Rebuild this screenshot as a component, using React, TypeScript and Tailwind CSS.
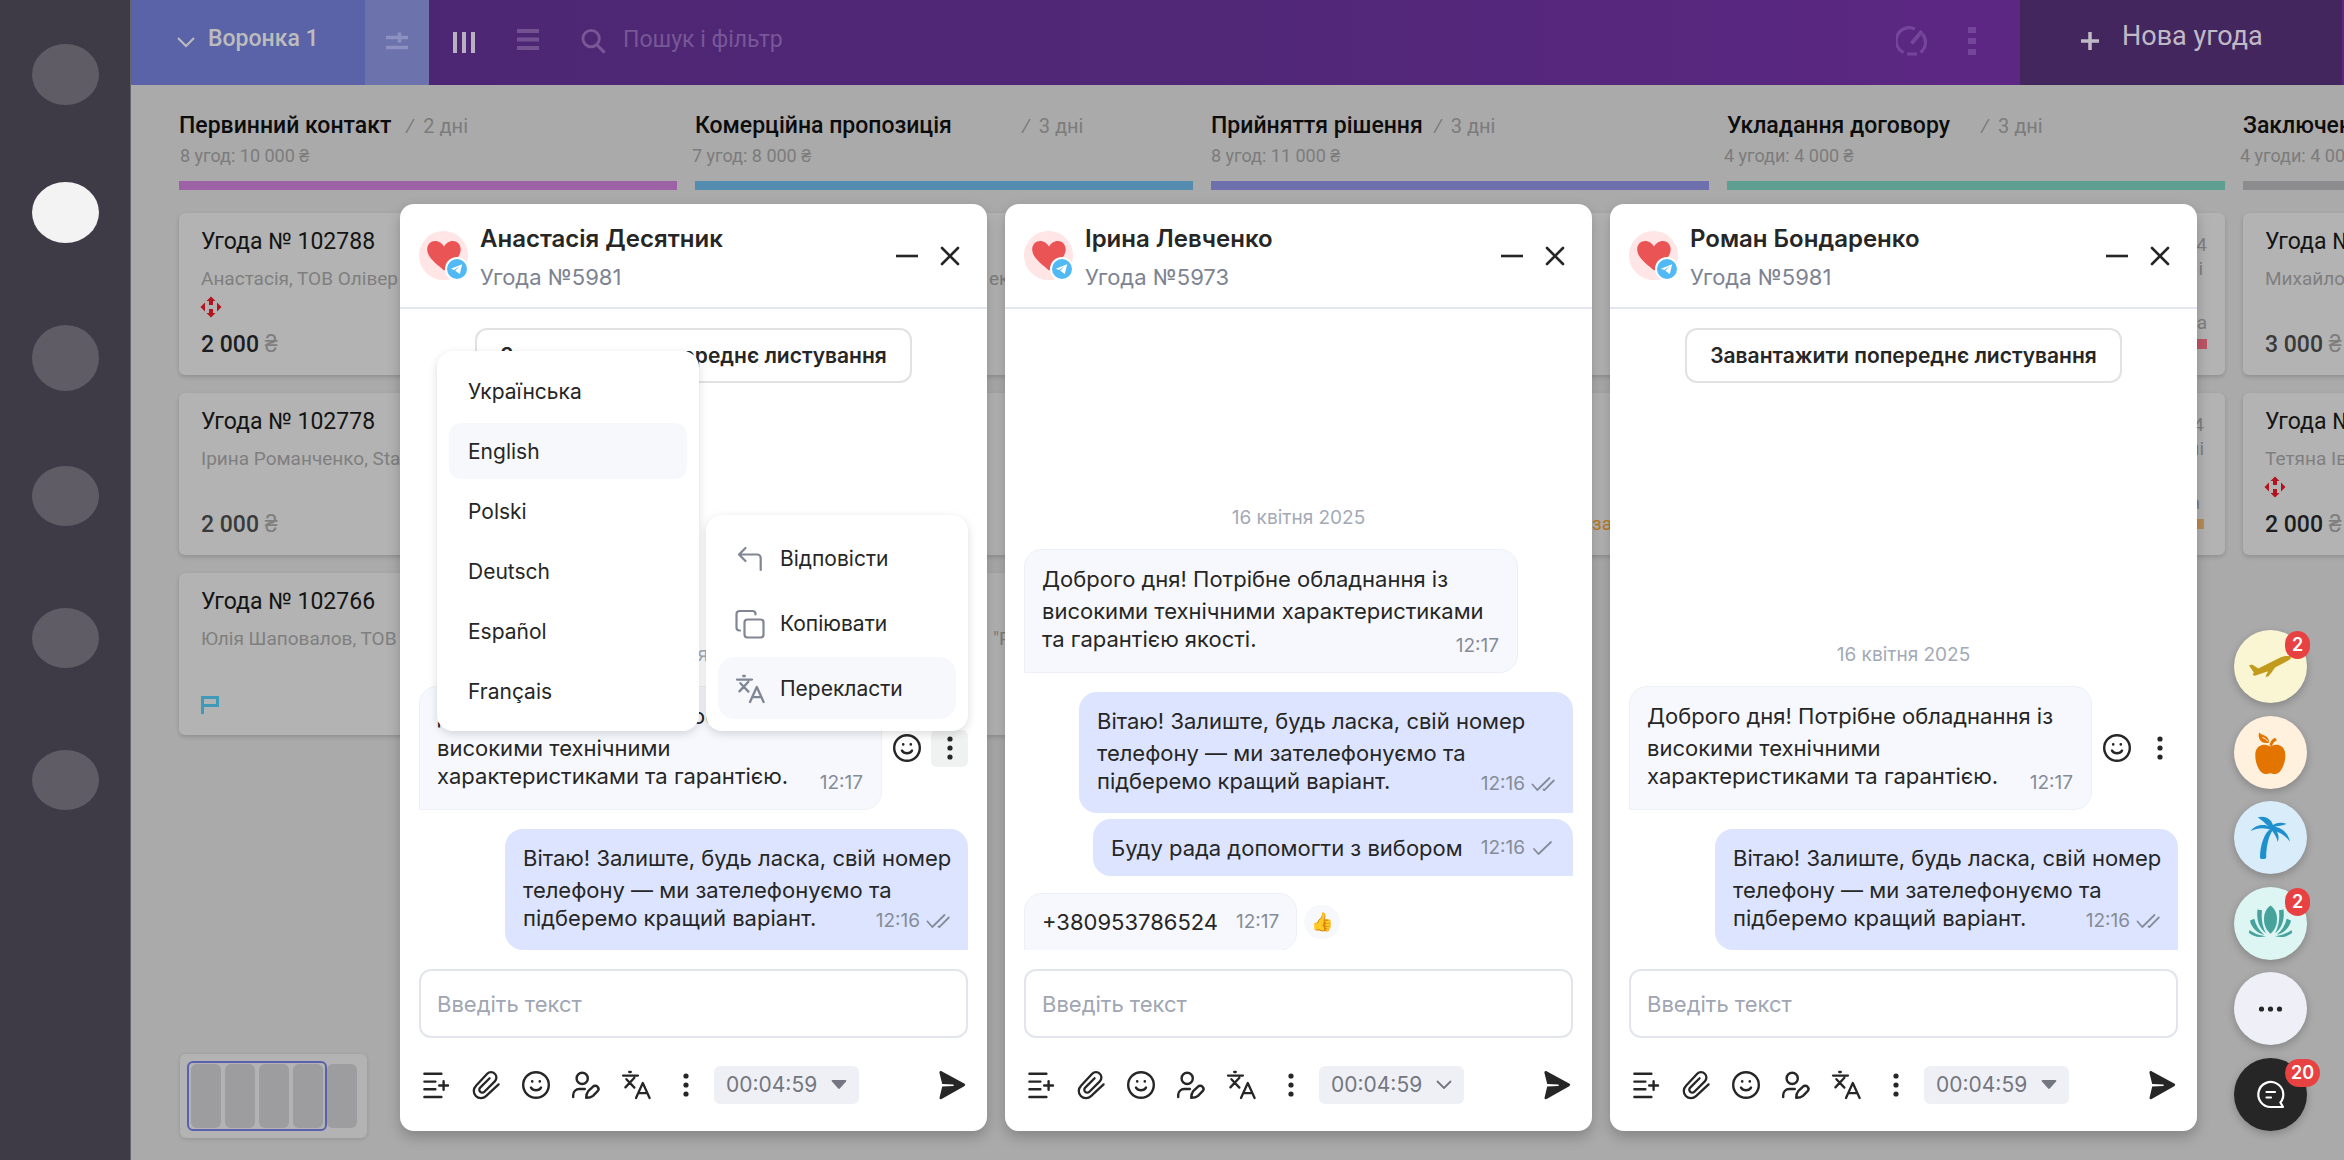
import React from "react";

type IconProps = { className?: string };

const SmileIcon = ({ className = "size-8" }: IconProps) => (
  <svg viewBox="0 0 32 32" className={className} fill="none" stroke="currentColor" strokeWidth="2.4" strokeLinecap="round" aria-hidden="true">
    <circle cx="16" cy="16" r="12.8" />
    <path d="M11 18.600c1 1.700 2.800 2.700 5 2.700s4-1 5-2.700" />
    <path d="M12.200 12.200v.2M19.800 12.200v.2" strokeWidth="2.600" />
  </svg>
);

const DotsIcon = ({ className = "size-8" }: IconProps) => (
  <svg viewBox="0 0 32 32" className={className} fill="currentColor" aria-hidden="true">
    <circle cx="16" cy="7" r="2.600" />
    <circle cx="16" cy="16" r="2.600" />
    <circle cx="16" cy="25" r="2.600" />
  </svg>
);

const TranslateIcon = ({ className = "size-8" }: IconProps) => (
  <svg viewBox="0 0 32 32" className={className} fill="none" stroke="currentColor" strokeWidth="2.300" strokeLinecap="round" strokeLinejoin="round" aria-hidden="true">
    <path d="M9.200 3h1.600M3 6.600h15M5.400 18.400l9-9.600M6.400 10.200l8 8.400" />
    <path d="M16 29l6.800-15L29.600 29M18.600 24.200h8.600" />
  </svg>
);

const TemplateIcon = () => (
  <svg viewBox="0 0 32 32" className="size-8" fill="none" stroke="currentColor" strokeWidth="2.400" strokeLinecap="round" aria-hidden="true">
    <path d="M4.400 4.800h17M4.400 12.600h11M4.400 20.200h11M4.400 28h17M23.600 12.200v8.600M19.200 16.500H28" />
  </svg>
);

const ClipIcon = () => (
  <svg viewBox="0 0 32 32" className="size-8" fill="none" stroke="currentColor" strokeWidth="2.300" strokeLinecap="round" strokeLinejoin="round" aria-hidden="true">
    <path d="M28.600 15.400L16 27.200a7.200 7.200 0 0 1-10.200-.2 7.200 7.200 0 0 1 .2-10.200L17.200 4.800a5.300 5.300 0 0 1 7.600 0 5.300 5.300 0 0 1 0 7.600L14.400 22.800a2.900 2.900 0 0 1-4.200 0 2.900 2.900 0 0 1 0-4.200l9.400-9.400" />
  </svg>
);

const SignIcon = () => (
  <svg viewBox="0 0 32 32" className="size-8" fill="none" stroke="currentColor" strokeWidth="2.400" strokeLinecap="round" strokeLinejoin="round" aria-hidden="true">
    <circle cx="12.200" cy="9.400" r="5.600" />
    <path d="M3.200 28v-2a6 6 0 0 1 6-6h5.600" />
    <path d="M16.200 28.800c0-3.400.6-5 2-6.600l4.600-4.400a3.200 3.200 0 0 1 4.800 0 3.200 3.200 0 0 1 0 4.400L23 26.800c-1.800 1.600-3.600 2-6.800 2z" />
  </svg>
);

const SendIcon = () => (
  <svg viewBox="0 0 32 32" className="size-8" fill="currentColor" aria-hidden="true">
    <path d="M3.400 3.700c0-1.500 1-2.100 2.200-1.500l22.600 12.400c1.300.7 1.300 2 0 2.700L5.600 30c-1.300.6-2.400 0-2-1.500l2.600-10.900 11-.6c.8-.1.800-1.400 0-1.500l-11-.6z" />
  </svg>
);

const ReplyIcon = () => (
  <svg viewBox="0 0 32 32" className="size-8" fill="none" stroke="currentColor" strokeWidth="2.200" strokeLinecap="round" strokeLinejoin="round" aria-hidden="true">
    <path d="M11.500 5L5 11.500l6.500 6.500M5.400 11.500h17.800a3.500 3.500 0 0 1 3.500 3.500v12" />
  </svg>
);

const CopyIcon = () => (
  <svg viewBox="0 0 32 32" className="size-8" fill="none" stroke="currentColor" strokeWidth="2.200" strokeLinecap="round" strokeLinejoin="round" aria-hidden="true">
    <rect x="10.500" y="11.500" width="19" height="18" rx="3" />
    <path d="M6 22.500H5.500a3 3 0 0 1-3-3V6a3 3 0 0 1 3-3h13a3 3 0 0 1 3 3v.5" />
  </svg>
);

const Checks = ({ double = false }: { double?: boolean }) => (
  <svg viewBox="0 0 24 18" className="h-[18px] w-6" fill="none" stroke="currentColor" strokeWidth="1.800" strokeLinecap="round" strokeLinejoin="round" aria-hidden="true">
    {double ? <path d="M1.500 9.500l4.800 5.500L18.500 3M12.500 14.500l.8.600L22.800 5.500" /> : <path d="M3 10l4.500 5L20 3" />}
  </svg>
);

const NovaPoshtaIcon = () => (
  <svg viewBox="0 0 24 24" className="-ml-0.5 size-6" fill="#b3131d" aria-label="Нова пошта">
    <path d="M12 1.500l4.500 4.500H14v4h-4V6H7.500zM12 22.500l4.500-4.500H14v-4h-4v4H7.500zM6 7.500v9L1.500 12zM18 7.500v9l4.500-4.500z" />
  </svg>
);

const Avatar = () => (
  <span className="relative block size-[49px] shrink-0 rounded-full bg-[#ffe5e5]">
    <svg viewBox="0 0 49 49" className="absolute inset-0" fill="#ea5455" aria-hidden="true">
      <path d="M25 39.500C18 33 8.200 27 8.200 18.300c0-5 3.700-8.300 8-8.300 3.800 0 7 2.400 8.800 5.600C26.800 12.400 30 10 33.700 10c4.400 0 8 3.300 8 8.300C41.700 27 32 33 25 39.500z" />
    </svg>
    <svg viewBox="0 0 24 24" className="absolute -right-px top-6.5 size-6" aria-hidden="true">
      <circle cx="12" cy="12" r="11" fill="#51b9f4" stroke="#fff" strokeWidth="2" />
      <path d="M17.200 7.200L5.800 11.700l3.400 1.300 5-3.800-3.900 4.600 4.500 3.300z" fill="#fff" />
    </svg>
  </span>
);

type Deal = { id?: string; client?: string; clientPad?: string; price?: string; novaPoshta?: boolean; flag?: boolean; dim?: boolean; side?: React.ReactNode };

const DealCard = ({ deal }: { deal: Deal }) => (
  <article className="relative flex h-[162px] flex-col overflow-hidden rounded-md bg-[#b3b3b3] px-[22px] pt-3.5 whitespace-nowrap shadow-[0_2px_4px_rgba(0,0,0,0.16)]">
    <h3 className="h-[30px] text-[23px]/[30px] text-[#141414]">{deal.id}</h3>
    <p className={"mt-2.5 h-6 text-[19px]/6 text-[#7f7f7f] " + (deal.clientPad ?? "")}>{deal.client}</p>
    <div className="mt-1 h-6">{deal.novaPoshta && <NovaPoshtaIcon />}</div>
    <div className="mt-[11px] flex h-[30px] items-center text-[23px]/[30px] font-medium">
      {deal.price && (
        <span className={deal.dim ? "text-[#3a3a3a]" : "text-[#1b1d21]"}>
          {deal.price} <span className="font-normal text-[#7f7f7f]">₴</span>
        </span>
      )}
      {deal.flag && (
        <svg viewBox="0 0 20 20" className="size-5" fill="none" stroke="#3f9ab8" strokeWidth="3" aria-label="Прапорець">
          <path d="M1.500 19V2.500h15v8h-15" />
        </svg>
      )}
    </div>
    {deal.side}
  </article>
);

const columns: { title: string; gap: string; days?: string; sub: string; subPad: string; bar: string; deals: Deal[] }[] = [
  {
    title: "Первинний контакт", gap: "ml-3.5", days: "2 дні", sub: "8 угод: 10 000 ₴", subPad: "pl-px", bar: "bg-[#9d62a5]",
    deals: [
      { id: "Угода № 102788", client: "Анастасія, ТОВ Олівер", price: "2 000", novaPoshta: true },
      { id: "Угода № 102778", client: "Ірина Романченко, Star", price: "2 000", dim: true },
      { id: "Угода № 102766", client: "Юлія Шаповалов, ТОВ", flag: true },
    ],
  },
  {
    title: "Комерційна пропозиція", gap: "ml-[69px]", days: "3 дні", sub: "7 угод: 8 000 ₴", subPad: "-ml-[3px]", bar: "bg-[#538cae]",
    deals: [
      { client: "ек", clientPad: "pl-[272px]" },
      {},
      { client: "\"Р", clientPad: "pl-[276px]" },
    ],
  },
  {
    title: "Прийняття рішення", gap: "ml-2.5", days: "3 дні", sub: "8 угод: 11 000 ₴", subPad: "", bar: "bg-[#6d70ad]",
    deals: [
      {},
      { side: <span className="absolute left-[381px] top-[119px] text-[19px]/6 text-[#bd7a22]">за</span> },
    ],
  },
  {
    title: "Укладання договору", gap: "ml-7.5", days: "3 дні", sub: "4 угоди: 4 000 ₴", subPad: "-ml-[3px]", bar: "bg-[#5e9f92]",
    deals: [
      {
        side: (
          <div className="absolute top-5 right-[18px] flex flex-col items-end text-[19px]/6 text-[#7f7f7f]">
            <span>4</span>
            <span className="pr-1">і</span>
            <span className="mt-7.5">а</span>
            <span className="mt-1 h-2.5 w-8 bg-[#bd5566]" />
          </div>
        ),
      },
      {
        side: (
          <div className="absolute top-5 right-[21px] flex flex-col items-end text-[19px]/6 text-[#7f7f7f]">
            <span>4</span>
            <span>ні</span>
            <span className="mt-7.5 pr-1">а</span>
            <span className="mt-1 h-2.5 w-8 bg-[#b88b56]" />
          </div>
        ),
      },
    ],
  },
  {
    title: "Заключення", gap: "ml-4", sub: "4 угоди: 4 000 ₴", subPad: "-ml-[3px]", bar: "bg-[#8c8c8e]",
    deals: [
      { id: "Угода № 102781", client: "Михайло", price: "3 000", dim: true },
      { id: "Угода № 102779", client: "Тетяна Іванова", price: "2 000", novaPoshta: true },
    ],
  },
];

const TopBar = () => (
  <header className="flex h-[85px] items-stretch bg-linear-to-r from-[#4b2672] via-[#512778] to-[#5c2783] to-85%">
    <button className="flex w-[234px] items-center gap-3 bg-[#5b63a8] pb-1.5 pl-[45px] text-[23px] font-medium text-[#bcbcbc]">
      <svg viewBox="0 0 20 12" className="mt-1 h-3 w-5" fill="none" stroke="currentColor" strokeWidth="2" aria-hidden="true"><path d="M2 2l8 8 8-8" /></svg>
      Воронка 1
    </button>
    <button aria-label="Налаштування" className="flex w-16 items-center justify-center bg-[#6c72ab] pb-1 text-[#8d91c2]">
      <svg viewBox="0 0 24 24" className="size-6" fill="none" stroke="currentColor" strokeWidth="3.500" aria-hidden="true"><path d="M1 8.500h22M14.500 3.500v10M1 18.500h22" /></svg>
    </button>
    <button aria-label="Канбан" className="ml-[23px] pb-0.5 text-[#b9b1c2]">
      <svg viewBox="0 0 24 24" className="size-6" fill="currentColor" aria-hidden="true"><path d="M1 2h4v21H1zM10 2h4v21h-4zM19 2h4v21h-4z" /></svg>
    </button>
    <button aria-label="Список" className="ml-10 pb-2 text-[#735292]">
      <svg viewBox="0 0 24 24" className="size-6" fill="currentColor" aria-hidden="true"><path d="M1 2h22v4H1zM1 10.500h22v4H1zM1 19h22v4H1z" /></svg>
    </button>
    <label className="ml-10 flex flex-1 items-center gap-4 pb-1 text-[#785796]">
      <svg viewBox="0 0 28 28" className="size-7" fill="none" stroke="currentColor" strokeWidth="3" aria-hidden="true"><circle cx="11.500" cy="11.500" r="8.500" /><path d="M17.500 18l8 8" /></svg>
      <input type="search" placeholder="Пошук і фільтр" aria-label="Пошук і фільтр" className="w-full bg-transparent text-[23px] outline-none placeholder:text-[#785796]" />
    </label>
    <button aria-label="Показники" className="pb-0.5 text-[#74459a]">
      <svg viewBox="0 0 32 32" className="size-8" fill="none" stroke="currentColor" strokeWidth="3.200" aria-hidden="true">
        <path d="M7.500 26.500A13 13 0 0 1 19 3M26.500 8a13 13 0 0 1-2 18.500M11 28h10" />
        <path d="M15.500 17.500L26 5" strokeWidth="4" />
      </svg>
    </button>
    <button aria-label="Ще" className="mr-11 ml-10 pb-1 text-[#74459a]">
      <svg viewBox="0 0 8 28" className="h-7 w-2" fill="currentColor" aria-hidden="true"><path d="M0 0h8v6H0zM0 11h8v6H0zM0 22h8v6H0z" /></svg>
    </button>
    <button className="flex w-[322px] items-center bg-[#44265f] pb-3 pl-[61px] text-[27px] text-[#c0bac6]">
      <svg viewBox="0 0 18 18" className="mt-2 mr-[23px] size-[18px]" stroke="currentColor" strokeWidth="3.500" aria-hidden="true"><path d="M9 0v18M0 9h18" /></svg>
      Нова угода
    </button>
    <span className="w-0.5" />
  </header>
);

const Board = () => (
  <section className="relative flex-1 overflow-hidden bg-[#aaaaaa]">
    <div className="flex gap-[18px] pt-[26px] pl-12">
      {columns.map((c) => (
        <div key={c.title} className="w-[498px] shrink-0">
          <div className="flex h-[30px] items-center whitespace-nowrap">
            <h2 className="text-[23px]/[30px] font-medium text-[#0c0c0c]">{c.title}</h2>
            {c.days && (
              <span className={"flex items-center gap-2 text-xl/[30px] text-[#7c7c7c] " + c.gap}>
                <svg viewBox="0 0 10 14" className="h-3.5 w-2.5" stroke="currentColor" strokeWidth="1.500" aria-hidden="true"><path d="M9 0L1 14" /></svg>
                {c.days}
              </span>
            )}
          </div>
          <p className={"h-[30px] text-lg/[30px] text-[#7c7c7c] " + c.subPad}>{c.sub}</p>
          <div className={"mt-2.5 h-[9px] " + c.bar} />
          <div className="mt-[23px] flex flex-col gap-[18px]">
            {c.deals.map((d, i) => <DealCard key={i} deal={d} />)}
          </div>
        </div>
      ))}
    </div>
    <div className="absolute bottom-[22px] left-[49px] rounded-md bg-[#b3b3b3] py-[7px] pr-10 pl-[7px] shadow-[0_1px_4px_rgba(0,0,0,0.14)]">
      <div className="relative flex gap-1 rounded-md border-2 border-[#5a61ac] px-0.5 py-px">
        {[0, 1, 2, 3].map((i) => <span key={i} className="h-16 w-[30px] rounded-md bg-[#9d9d9f]" />)}
        <span className="absolute top-px left-full ml-0.5 h-16 w-[30px] rounded-md bg-[#9d9d9f]" />
      </div>
    </div>
  </section>
);

type MessageProps = { lines: string[]; time: string; out?: boolean; check?: "single" | "double"; size?: string };

const Message = ({ lines, time, out, check, size = "" }: MessageProps) => {
  const single = lines.length === 1;
  const tone = out
    ? "self-end rounded-[18px] rounded-br-none bg-[#dce4ff] px-[18px]"
    : "self-start rounded-[18px] rounded-bl-none border border-[#eef0f7] bg-[#f7f8fd] px-[17px]";
  const pad = single ? "flex items-center gap-[18px]" : out ? "pt-[11px] pb-[18px]" : "pt-[11px] pb-[19px]";
  return (
    <div className={"relative shrink-0 text-[22px] text-[#262626] " + tone + " " + pad + " " + size}>
      {lines.map((l, i) => (
        <p key={l} className={"whitespace-nowrap " + (i === 0 && !single ? "leading-9" : "leading-7")}>{l}</p>
      ))}
      <span className={"flex items-center gap-1.5 text-[19px]/6 text-[#858c99] " + (single ? "" : out ? "absolute right-[18px] bottom-[17px]" : "absolute right-[18px] bottom-3.5")}>
        {time}
        {check && <Checks double={check === "double"} />}
      </span>
    </div>
  );
};

const DateMark = () => (
  <p className="mb-[19px] self-center text-[19px]/6 text-[#a3a9b6]">16 квітня 2025</p>
);

const MessageActions = ({ active = false }: { active?: boolean }) => (
  <div className="ml-auto flex items-center gap-2 text-[#262626]">
    <button aria-label="Додати реакцію"><SmileIcon className="size-8" /></button>
    <button aria-label="Дії з повідомленням" className={"flex size-[37px] items-center justify-center rounded-md " + (active ? "bg-[#f0f1f1]" : "")}><DotsIcon className="size-8" /></button>
  </div>
);

const LoadButton = () => (
  <button className="mx-auto mt-[19px] h-[55px] shrink-0 rounded-xl border-2 border-[#e2e2e4] bg-white px-[23px] text-[21px] font-semibold whitespace-nowrap text-[#262626]">
    Завантажити попереднє листування
  </button>
);

const ChatWindow = ({ name, deal, outlineArrow, children }: { name: string; deal: string; outlineArrow?: boolean; children: React.ReactNode }) => (
  <section aria-label={name} className="relative flex min-w-0 flex-1 flex-col rounded-[14px] bg-white shadow-[0_6px_14px_rgba(0,0,0,0.22)]">
    <header className="flex h-[105px] items-center gap-3 border-b-2 border-[#e3e6ee] px-[19px]">
      <Avatar />
      <div className="flex-1 pt-1">
        <h2 className="text-2xl/8 font-semibold text-[#262626]">{name}</h2>
        <p className="mt-1.5 text-[22px]/8 text-[#7d8391]">{deal}</p>
      </div>
      <button aria-label="Згорнути" className="text-[#262626]">
        <svg viewBox="0 0 22 22" className="size-[22px]" stroke="currentColor" strokeWidth="2.600" aria-hidden="true"><path d="M0 11h22" /></svg>
      </button>
      <button aria-label="Закрити" className="mr-2 ml-2.5 text-[#262626]">
        <svg viewBox="0 0 20 20" className="size-5" stroke="currentColor" strokeWidth="2.600" strokeLinecap="round" aria-hidden="true"><path d="M2 2l16 16M18 2L2 18" /></svg>
      </button>
    </header>
    <div className="flex flex-1 flex-col overflow-hidden px-[19px]">{children}</div>
    <div className="px-[19px] pt-[19px] pb-[27px]">
      <input type="text" aria-label="Повідомлення" placeholder="Введіть текст" className="block h-[69px] w-full rounded-xl border-2 border-[#e3e5ed] bg-white px-4 text-[22px] outline-none placeholder:text-[#a0a6b3]" />
      <div className="mt-7 flex items-center gap-[18px] pl-px text-[#262626]">
        <button aria-label="Шаблони"><TemplateIcon /></button>
        <button aria-label="Прикріпити файл"><ClipIcon /></button>
        <button aria-label="Емодзі"><SmileIcon /></button>
        <button aria-label="Підпис"><SignIcon /></button>
        <button aria-label="Перекласти"><TranslateIcon /></button>
        <button aria-label="Ще"><DotsIcon /></button>
        <button className="-ml-1.5 flex h-[38px] items-center gap-3.5 rounded-md bg-[#eff0f6] px-3 text-[21px] text-[#74777f]">
          00:04:59
          {outlineArrow ? (
            <svg viewBox="0 0 16 10" className="h-2.5 w-4" fill="none" stroke="currentColor" strokeWidth="1.800" strokeLinecap="round" strokeLinejoin="round" aria-hidden="true"><path d="M1.500 1.500L8 8l6.500-6.500" /></svg>
          ) : (
            <svg viewBox="0 0 16 10" className="h-2.5 w-4" fill="currentColor" aria-hidden="true"><path d="M1.500 0h13c.8 0 1.200.8.600 1.400L8.800 8.500c-.4.500-1.200.5-1.600 0L.9 1.400C.3.800.7 0 1.500 0z" /></svg>
          )}
        </button>
        <button aria-label="Надіслати" className="ml-auto"><SendIcon /></button>
      </div>
    </div>
  </section>
);

const question = ["Доброго дня! Потрібне обладнання із", "високими технічними", "характеристиками та гарантією."];
const answer = ["Вітаю! Залиште, будь ласка, свій номер", "телефону — ми зателефонуємо та", "підберемо кращий варіант."];

const StandardThread = ({ active }: { active?: boolean }) => (
  <>
    <LoadButton />
    <div className="flex-1" />
    <DateMark />
    <div className="flex items-center">
      <Message lines={question} time="12:17" size="w-[463px]" />
      <MessageActions active={active} />
    </div>
    <div className="h-[19px] shrink-0" />
    <Message lines={answer} time="12:16" out check="double" size="w-[463px]" />
  </>
);

const languages = ["Українська", "English", "Polski", "Deutsch", "Español", "Français"];
const menuShadow = "shadow-[0_3px_10px_rgba(0,0,0,0.14)]";

const Menus = () => (
  <div className="absolute right-[19px] bottom-[400px] left-[37px] flex items-end justify-between text-[21px] text-[#262626]">
    <ul className={"flex w-[262px] flex-col gap-1 rounded-2xl bg-white p-3 " + menuShadow}>
      {languages.map((l) => (
        <li key={l}>
          <button className={"block h-14 w-full rounded-xl px-[19px] pt-0.5 text-left " + (l === "English" ? "bg-[#f7f8fc]" : "")}>{l}</button>
        </li>
      ))}
    </ul>
    <ul className={"flex w-[262px] flex-col gap-[3px] rounded-2xl bg-white p-3 " + menuShadow}>
      {[
        { label: "Відповісти", icon: <ReplyIcon /> },
        { label: "Копіювати", icon: <CopyIcon /> },
        { label: "Перекласти", icon: <TranslateIcon /> },
      ].map((m) => (
        <li key={m.label}>
          <button className={"flex h-[62px] w-full items-center gap-3.5 rounded-2xl px-4 pt-0.5 text-left " + (m.label === "Перекласти" ? "bg-[#f7f8fc]" : "")}>
            <span className="text-[#808694]">{m.icon}</span>
            {m.label}
          </button>
        </li>
      ))}
    </ul>
  </div>
);

const Badge = ({ children }: { children: React.ReactNode }) => (
  <span className="absolute top-px left-[51px] flex h-7 min-w-[25px] items-center justify-center rounded-full bg-[#e84142] px-1.5 text-lg font-semibold text-white">{children}</span>
);

const DockButton = ({ label, tone, badge, children }: { label: string; tone: string; badge?: string; children: React.ReactNode }) => (
  <button aria-label={label} className={"relative size-[73px] rounded-full shadow-[0_3px_8px_rgba(0,0,0,0.22)] " + tone}>
    <svg viewBox="0 0 73 73" className="size-full" fill="currentColor" aria-hidden="true">{children}</svg>
    {badge && <Badge>{badge}</Badge>}
  </button>
);

const Dock = () => (
  <aside className="ml-[19px] flex h-[501px] flex-col justify-between">
    <DockButton label="Літак" tone="bg-[#faf6d4] text-[#c29a1c]" badge="2">
      <path d="M15 35.500c1-1 2.500-1 3.500-.7l5.800 3.700c7-3.500 14-7 21-10.500 4-2 8.500-2.400 11.700-1.500.5 2.300-2 4-4.500 5L41 37.500c-2 3-4.500 6.500-6.500 8.700l-3 .8c.5-2 1.800-4 2.500-5.800L21 45.700c-1.200 0-2.200-.6-2.400-1.700l1.400-1.300z" />
    </DockButton>
    <DockButton label="Яблуко" tone="bg-[#fff1de] text-[#e37400]">
      <path d="M36.300 30.500c3-1.500 6-2.200 9-1.200 4.500 1.500 6 5.500 6 10.200 0 8.500-4.500 18.500-10.300 18.500-2 0-3-.8-4.700-.8s-2.700.8-4.700.8c-5.800 0-10.300-10-10.300-18.500 0-4.700 1.500-8.700 6-10.200 3-1 6-.3 9 1.200z" />
      <path d="M35.500 29.500c.5-3.500 2.500-6.500 5.500-7.800l2 2.500c-2.500 1.200-4.500 3-5 5.800z" />
      <path d="M25 16.500c1.500 1.800 4 2.200 6 3.300 3 1.600 4.200 4 4.200 6.600-3.200 1.200-6.500.8-8.500-1.600-2-2.400-2.500-5.300-1.700-8.300z" />
      <path d="M28.500 21.500c2 .6 4 2 5.500 4" stroke="#fff1de" strokeWidth="1" fill="none" />
    </DockButton>
    <DockButton label="Пальма" tone="bg-[#d8ecfa] text-[#1e90cd]">
      <path d="M37.500 27.500c-7 3-11.500 17-11.500 29 0 2 6 2 6.200 0 0-11 2.300-21 6.300-27z" />
      <path d="M37 26c-4.500-.8-7.500-6.500-13.300-9.500 5.800-2.500 13.300.5 15.300 7.500 4-2.500 9-3 13.500-1-4 2-8 1.500-11.500 2.800 7 1.200 13.500 6.700 15 15-4-5.500-8-8-13-10 1.800 3.500 2 6.500.8 10.200-1.300-5.500-3.800-8.500-6.300-12-6-2.200-13-3-20.800 1 3-5.200 12-8.500 20.300-4z" />
    </DockButton>
    <DockButton label="Лотос" tone="bg-[#ddf6f4] text-[#47a29c]" badge="2">
      <path d="M36.500 18.500c4.500 3.500 6.500 8 6.500 13.500 0 5.800-2 10.800-6.500 14.800-4.500-4-6.500-9-6.500-14.800 0-5.500 2-10 6.500-13.500z" />
      <path id="petals" d="M23.500 22.500l4.500.8c-.8 7.500 0 15.500 4 23-7-5-9.800-14-8.500-23.800zM16 33.500l4.300-1.700c1.500 6.500 5 12 10 16-7-1.500-13-7-14.300-14.300zM15.500 43c3.500 2.800 9.500 5.500 16.500 6.200-7.500 2-13 0-17.200-3.400z" />
      <use href="#petals" transform="matrix(-1 0 0 1 73 0)" />
    </DockButton>
    <DockButton label="Більше" tone="bg-[#eff0f7] text-[#262626]">
      <circle cx="27.500" cy="37" r="2.600" /><circle cx="36.500" cy="37" r="2.600" /><circle cx="45.500" cy="37" r="2.600" />
    </DockButton>
    <DockButton label="Чати" tone="bg-[#262626] text-white" badge="20">
      <g fill="none" stroke="currentColor" strokeWidth="2.200" strokeLinecap="round" strokeLinejoin="round">
        <path d="M36.500 49H49l-2.600-4.500A12.500 12.500 0 1 0 36.500 49zM32.500 34h8.500M32.500 39.500h4.500" />
      </g>
    </DockButton>
  </aside>
);

const navDots = [
  "mt-11 h-[61px] bg-[#5f5c66]",
  "mt-[77px] h-[61px] bg-[#f3f3f3]",
  "mt-[82px] h-[66px] bg-[#5f5c66]",
  "mt-[75px] h-[60px] bg-[#5f5c66]",
  "mt-[82px] h-[60px] bg-[#5f5c66]",
  "mt-[82px] h-[60px] bg-[#5f5c66]",
];

export default function App() {
  return (
    <div className="relative flex min-h-screen overflow-hidden font-['Roboto',sans-serif]">
      <nav aria-label="Головне меню" className="flex w-[131px] shrink-0 flex-col items-center border-r border-[#65636b] bg-[#3e3b46]">
        {navDots.map((d, i) => <button key={i} aria-label={`Розділ ${i + 1}`} className={"w-[67px] shrink-0 rounded-[50%] " + d} />)}
      </nav>
      <main className="flex min-w-0 flex-1 flex-col">
        <TopBar />
        <Board />
      </main>
      <div className="absolute inset-0 flex items-end gap-[18px] pr-[37px] pb-[29px] pl-[400px] font-['Inter',sans-serif]">
        <div className="flex h-[927px] min-w-0 flex-1 gap-[18px]">
          <ChatWindow name="Анастасія Десятник" deal="Угода №5981">
            <StandardThread active />
            <Menus />
          </ChatWindow>
          <ChatWindow name="Ірина Левченко" deal="Угода №5973" outlineArrow>
            <div className="flex-1" />
            <DateMark />
            <Message lines={["Доброго дня! Потрібне обладнання із", "високими технічними характеристиками", "та гарантією якості."]} time="12:17" size="w-[494px]" />
            <div className="h-[19px] shrink-0" />
            <Message lines={answer} time="12:16" out check="double" size="w-[494px]" />
            <div className="h-1.5 shrink-0" />
            <Message lines={["Буду рада допомогти з вибором"]} time="12:16" out check="single" size="h-[57px]" />
            <div className="-mb-px flex items-center gap-[7px] pt-[17px]">
              <Message lines={["+380953786524"]} time="12:17" size="h-[58px]" />
              <button aria-label="Реакція" className="flex h-[34px] w-9 items-center justify-center rounded-full bg-[#f7f8fc] text-lg">👍</button>
            </div>
          </ChatWindow>
          <ChatWindow name="Роман Бондаренко" deal="Угода №5981">
            <StandardThread />
          </ChatWindow>
        </div>
        <Dock />
      </div>
    </div>
  );
}
